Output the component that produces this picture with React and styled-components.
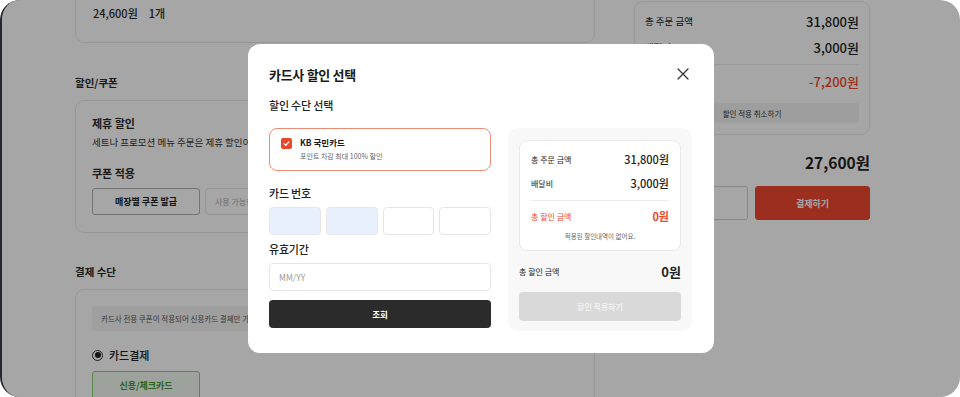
import React from "react";
import styled, { createGlobalStyle } from "styled-components";

const GlobalStyle = createGlobalStyle`
  html, body {
    margin: 0;
    padding: 0;
    background: #ffffff;
  }
  body {
    font-family: "Noto Sans CJK KR", "Noto Sans", sans-serif;
    color: #111;
  }
  * { box-sizing: border-box; }
`;

const Frame = styled.div`
  position: relative;
  width: 960px;
  height: 397px;
  border-radius: 20px;
  border-left: 2px solid #23282f;
  overflow: hidden;
  background: #fff;
`;

const Page = styled.div`
  display: flex;
  gap: 39px;
  padding-left: 73px;
  margin-top: -30px;
`;

const LeftCol = styled.div`
  width: 520px;
  display: flex;
  flex-direction: column;
`;

const RightCol = styled.div`
  width: 236px;
  display: flex;
  flex-direction: column;
  padding-top: 31px;
`;

const Card = styled.div`
  border: 1px solid #e9e9e9;
  border-radius: 9px;
  padding: ${(p) => p.$pad || "16px 16px"};
`;

const PriceLine = styled.div`
  display: flex;
  gap: 11px;
  font-size: 11px;
  font-weight: 500;
  color: #2a2a2a;
  height: 71px;
  align-items: flex-end;
  padding-bottom: 21px;
`;

const SectionTitle = styled.div`
  font-size: 10.5px;
  font-weight: 600;
  color: #2a2a2a;
  margin: ${(p) => p.$m || "32px 0 9px"};
  line-height: 16px;
`;

const SubTitle = styled.div`
  font-size: 11px;
  font-weight: 600;
  color: #2a2a2a;
  line-height: 16px;
  margin-top: ${(p) => p.$mt || "0"};
`;

const Desc = styled.div`
  font-size: 9.5px;
  color: #333;
  margin-top: 5px;
  line-height: 13px;
  white-space: nowrap;
`;

const CouponRow = styled.div`
  display: flex;
  gap: 5px;
  margin-top: 7px;
`;

const OutlineBtn = styled.div`
  width: 108px;
  height: 27px;
  border: 1px solid #b3b3b3;
  border-radius: 3px;
  display: flex;
  align-items: center;
  justify-content: center;
  font-size: 9px;
  font-weight: 700;
  color: #222;
`;

const GhostInput = styled.div`
  flex: 1;
  height: 27px;
  border: 1px solid #e6e6e6;
  border-radius: 4px;
  font-size: 8px;
  color: #aaa;
  display: flex;
  align-items: center;
  padding-left: 9px;
`;

const InfoBox = styled.div`
  background: #f5f5f5;
  border-radius: 3px;
  height: 25px;
  display: flex;
  align-items: center;
  padding-left: 9px;
  font-size: 7.5px;
  color: #555;
`;

const RadioRow = styled.div`
  display: flex;
  align-items: center;
  gap: 6px;
  margin-top: 16px;
  font-size: 11px;
  font-weight: 500;
  color: #222;
`;

const Radio = styled.span`
  width: 11px;
  height: 11px;
  border-radius: 50%;
  border: 1px solid #333;
  display: flex;
  align-items: center;
  justify-content: center;
  &::after {
    content: "";
    width: 6px;
    height: 6px;
    border-radius: 50%;
    background: #222;
  }
`;

const GreenBtn = styled.div`
  width: 108px;
  height: 29px;
  margin-top: 8px;
  border: 1px solid #86cf76;
  border-radius: 3px;
  background: #f2faf0;
  color: #3e9a2c;
  font-size: 9px;
  font-weight: 700;
  display: flex;
  align-items: center;
  justify-content: center;
`;

const SumRow = styled.div`
  display: flex;
  justify-content: space-between;
  align-items: center;
  height: ${(p) => p.$h || "20px"};
  margin-top: ${(p) => p.$mt || "0"};
  font-size: ${(p) => p.$fs || "9.5px"};
  color: ${(p) => p.$color || "#222"};
`;

const SumValue = styled.span`
  font-size: ${(p) => p.$fs || "13px"};
  font-weight: ${(p) => p.$fw || 500};
  color: ${(p) => p.$color || "#222"};
`;

const Divider = styled.div`
  height: 1px;
  background: #ececec;
  margin: ${(p) => p.$m || "6px 0"};
`;

const GrayBtn = styled.div`
  height: 20px;
  margin-top: 12px;
  background: #f3f3f3;
  border-radius: 3px;
  display: flex;
  align-items: center;
  justify-content: center;
  font-size: 7.5px;
  color: #333;
`;

const TotalLine = styled.div`
  display: flex;
  justify-content: flex-end;
  font-size: 15.5px;
  font-weight: 700;
  color: #222;
  margin-top: 16px;
  line-height: 22px;
`;

const ActionRow = styled.div`
  display: flex;
  gap: 7px;
  margin-top: 13px;
`;

const ActionBtn = styled.div`
  height: 34px;
  flex: ${(p) => (p.$primary ? "0 0 115px" : "1")};
  border-radius: 3px;
  border: 1px solid ${(p) => (p.$primary ? "#ef472e" : "#d0d0d0")};
  background: ${(p) => (p.$primary ? "#ef472e" : "#fff")};
  color: #fff;
  font-size: 9px;
  font-weight: 700;
  display: flex;
  align-items: center;
  justify-content: center;
`;

/* modal */

const Overlay = styled.div`
  position: absolute;
  inset: 0;
  background: rgba(0, 0, 0, 0.35);
  display: flex;
  align-items: center;
  justify-content: center;
`;

const Modal = styled.div`
  width: 466px;
  height: 309px;
  background: #fff;
  border-radius: 12px;
  padding: 20px 22px 0 21px;
  display: flex;
  flex-direction: column;
`;

const ModalHeader = styled.div`
  display: flex;
  justify-content: space-between;
  align-items: center;
  height: 20px;
`;

const ModalTitle = styled.div`
  font-size: 13px;
  font-weight: 700;
  color: #1a1a1a;
  letter-spacing: -0.3px;
`;

const CloseBtn = styled.svg`
  width: 12px;
  height: 12px;
  margin-right: 3px;
`;

const ModalBody = styled.div`
  display: flex;
  gap: 17px;
  margin-top: 15px;
`;

const FormCol = styled.div`
  width: 222px;
  display: flex;
  flex-direction: column;
`;

const FormLabel = styled.div`
  font-size: 11px;
  font-weight: 500;
  color: #222;
  line-height: 16px;
  margin: ${(p) => p.$m || "0"};
  letter-spacing: -0.2px;
`;

const OptionBox = styled.div`
  height: 43px;
  border: 1px solid #f08a74;
  border-radius: 8px;
  display: flex;
  align-items: flex-start;
  gap: 8px;
  padding: 7px 11px;
`;

const Check = styled.span`
  width: 11px;
  height: 11px;
  margin-top: 2px;
  border-radius: 2px;
  background: #e8472c;
  display: flex;
  align-items: center;
  justify-content: center;
`;

const OptionText = styled.div`
  display: flex;
  flex-direction: column;
  gap: 2px;
`;

const OptionName = styled.div`
  font-size: 8.5px;
  font-weight: 700;
  color: #1a1a1a;
  line-height: 13px;
`;

const OptionSub = styled.div`
  font-size: 7px;
  color: #666;
  line-height: 11px;
`;

const CardNumRow = styled.div`
  display: grid;
  grid-template-columns: repeat(4, 1fr);
  gap: 5px;
  margin-top: 6px;
`;

const Field = styled.div`
  height: 28px;
  border: 1px solid #e6e6e6;
  border-radius: 4px;
  background: ${(p) => (p.$filled ? "#e8effd" : "#fff")};
  display: flex;
  align-items: center;
  padding-left: 9px;
  font-size: 8.5px;
  color: #9a9a9a;
`;

const DarkBtn = styled.div`
  height: 28px;
  margin-top: 9px;
  background: #2b2b2b;
  border-radius: 4px;
  color: #fff;
  font-size: 8.5px;
  font-weight: 700;
  display: flex;
  align-items: center;
  justify-content: center;
`;

const SummaryPanel = styled.div`
  width: 184px;
  height: 203px;
  background: #f8f8f8;
  border-radius: 10px;
  padding: 12px 11px 10px;
  display: flex;
  flex-direction: column;
`;

const SummaryCard = styled.div`
  background: #fff;
  border: 1px solid #e8e8e8;
  border-radius: 8px;
  padding: 8px 11px 9px;
`;

const Note = styled.div`
  text-align: center;
  font-size: 6.5px;
  color: #666;
  line-height: 10px;
  margin-top: 6px;
`;

const ApplyBtn = styled.div`
  height: 30px;
  margin-top: 12px;
  background: #d9d9d9;
  border-radius: 4px;
  color: #f5f5f5;
  font-size: 8px;
  font-weight: 500;
  display: flex;
  align-items: center;
  justify-content: center;
`;

const BackgroundPage = () => (
  <Page>
    <LeftCol>
      <Card $pad="0 17px">
        <PriceLine>
          <span>24,600원</span>
          <span>1개</span>
        </PriceLine>
      </Card>
      <SectionTitle $m="32px 0 9px">할인/쿠폰</SectionTitle>
      <Card $pad="14px 16px 17px">
        <SubTitle>제휴 할인</SubTitle>
        <Desc>세트나 프로모션 메뉴 주문은 제휴 할인이나 상품권</Desc>
        <SubTitle $mt="16px">쿠폰 적용</SubTitle>
        <CouponRow>
          <OutlineBtn>매장별 쿠폰 발급</OutlineBtn>
          <GhostInput>사용 가능한</GhostInput>
        </CouponRow>
      </Card>
      <SectionTitle $m="31px 0 9px">결제 수단</SectionTitle>
      <Card $pad="16px 16px 20px">
        <InfoBox>카드사 전용 쿠폰이 적용되어 신용카드 결제만 가능합니다.</InfoBox>
        <RadioRow>
          <Radio />
          카드결제
        </RadioRow>
        <GreenBtn>신용/체크카드</GreenBtn>
      </Card>
    </LeftCol>
    <RightCol>
      <Card $pad="9px 10px 11px">
        <SumRow $h="20px">
          총 주문 금액
          <SumValue>31,800원</SumValue>
        </SumRow>
        <SumRow $h="20px" $mt="6px">
          배달비
          <SumValue>3,000원</SumValue>
        </SumRow>
        <Divider $m="7px 0 6px" />
        <SumRow $h="20px">
          할인 금액
          <SumValue $color="#ef472e">-7,200원</SumValue>
        </SumRow>
        <GrayBtn>할인 적용 취소하기</GrayBtn>
      </Card>
      <TotalLine>27,600원</TotalLine>
      <ActionRow>
        <ActionBtn />
        <ActionBtn $primary>결제하기</ActionBtn>
      </ActionRow>
    </RightCol>
  </Page>
);

const CardDiscountModal = () => (
  <Modal>
    <ModalHeader>
      <ModalTitle>카드사 할인 선택</ModalTitle>
      <CloseBtn viewBox="0 0 12 12">
        <path d="M1 1 L11 11 M11 1 L1 11" stroke="#333" strokeWidth="1.3" strokeLinecap="round" />
      </CloseBtn>
    </ModalHeader>
    <FormLabel $m="13px 0 0">할인 수단 선택</FormLabel>
    <ModalBody>
      <FormCol>
        <OptionBox>
          <Check>
            <svg width="7" height="7" viewBox="0 0 8 8">
              <path d="M1.3 4.2 L3.2 6 L6.7 2.2" fill="none" stroke="#fff" strokeWidth="1.4" strokeLinecap="round" strokeLinejoin="round" />
            </svg>
          </Check>
          <OptionText>
            <OptionName>KB 국민카드</OptionName>
            <OptionSub>포인트 차감 최대 100% 할인</OptionSub>
          </OptionText>
        </OptionBox>
        <FormLabel $m="14px 0 0">카드 번호</FormLabel>
        <CardNumRow>
          <Field $filled />
          <Field $filled />
          <Field />
          <Field />
        </CardNumRow>
        <FormLabel $m="6px 0 6px">유효기간</FormLabel>
        <Field>MM/YY</Field>
        <DarkBtn>조회</DarkBtn>
      </FormCol>
      <SummaryPanel>
        <SummaryCard>
          <SumRow $fs="8px">
            총 주문 금액
            <SumValue $fs="11px">31,800원</SumValue>
          </SumRow>
          <SumRow $fs="8px" $mt="4px">
            배달비
            <SumValue $fs="11px">3,000원</SumValue>
          </SumRow>
          <Divider $m="7px 0 6px" />
          <SumRow $fs="8px" $h="18px" $color="#ef472e">
            총 할인 금액
            <SumValue $fs="11px" $fw={600} $color="#ef472e">0원</SumValue>
          </SumRow>
          <Note>적용된 할인내역이 없어요.</Note>
        </SummaryCard>
        <SumRow $fs="8px" $h="18px" $mt="11px">
          총 할인 금액
          <SumValue $fs="13px" $fw={700}>0원</SumValue>
        </SumRow>
        <ApplyBtn>할인 적용하기</ApplyBtn>
      </SummaryPanel>
    </ModalBody>
  </Modal>
);

const App = () => (
  <>
    <GlobalStyle />
    <Frame>
      <BackgroundPage />
      <Overlay>
        <CardDiscountModal />
      </Overlay>
    </Frame>
  </>
);

export default App;
